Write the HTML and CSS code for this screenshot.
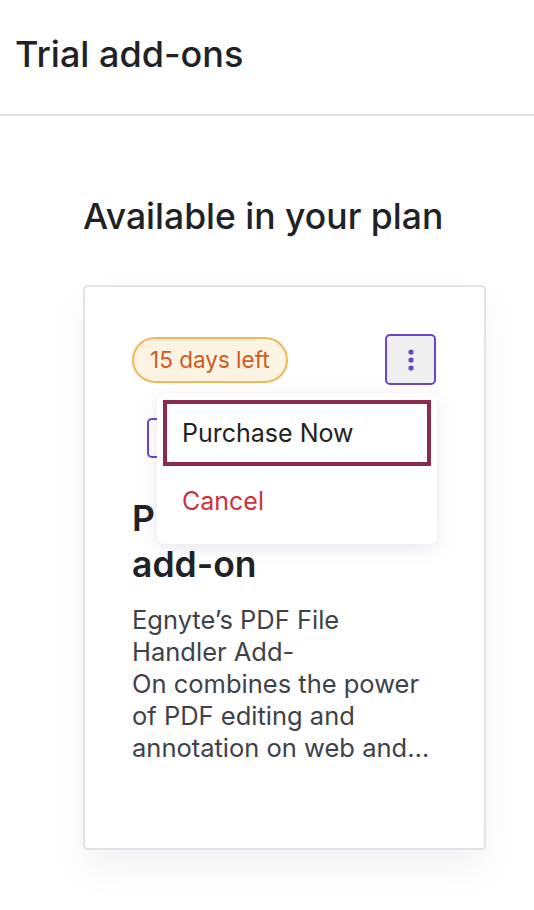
FILE: index.html
```html
<!DOCTYPE html>
<html lang="en">
<head>
<meta charset="utf-8">
<title>Trial add-ons</title>
<link rel="stylesheet" href="styles.css">
</head>
<body>
<header class="page-header">
  <h1 class="page-title">Trial add-ons</h1>
</header>
<main class="content">
  <h2 class="section-title">Available in your plan</h2>
  <article class="card">
    <div class="card-top">
      <span class="badge">15 days left</span>
      <div class="menu-wrap">
        <button class="kebab" aria-label="More actions">
          <svg width="8" height="24" viewBox="0 0 8 24"><circle cx="4" cy="4" r="2.6"/><circle cx="4" cy="12" r="2.6"/><circle cx="4" cy="20" r="2.6"/></svg>
        </button>
        <ul class="dropdown">
          <li class="dropdown-item focused">Purchase Now</li>
          <li class="dropdown-item danger">Cancel</li>
        </ul>
      </div>
    </div>
    <div class="logo-box"></div>
    <h3 class="card-title">PDF Handler add-on</h3>
    <p class="card-desc">Egnyte’s PDF File Handler Add-<br>On combines the power of PDF editing and annotation on web and mobile devices.</p>
  </article>
</main>
</body>
</html>
```
FILE: styles.css
```css
* { box-sizing: border-box; }
html, body { margin: 0; padding: 0; background: #fff; }
body {
  font-family: Inter, "Noto Sans", sans-serif;
  color: #212226;
}
.page-header {
  height: 116px;
  border-bottom: 2px solid #e3e3ea;
  display: flex;
  align-items: center;
  padding: 0 15px 6px;
}
.page-title {
  margin: 0;
  font-size: 36px;
  font-weight: 500;
}
.content {
  padding: 79px 0 60px 83px;
}
.section-title {
  margin: 0 0 46px;
  font-size: 35.5px;
  font-weight: 500;
  line-height: 44px;
}
.card {
  width: 403px;
  height: 565px;
  border: 2px solid #e2e2e8;
  border-radius: 5px;
  padding: 47px 48px 0 47px;
  box-shadow: 0 18px 36px rgba(30, 30, 60, 0.06);
  background: #fff;
}
.card-top {
  display: flex;
  justify-content: space-between;
  align-items: center;
  height: 51px;
}
.badge {
  display: inline-flex;
  align-items: center;
  height: 46px;
  padding: 0 16px;
  border: 2px solid #f1b75a;
  border-radius: 23px;
  background: #fdf3e3;
  color: #d15a1e;
  font-size: 22.5px;
  font-weight: 400;
}
.menu-wrap { position: relative; }
.kebab {
  width: 51px;
  height: 51px;
  border: 2px solid #6a45c6;
  border-radius: 5px;
  background: #efeff0;
  display: flex;
  align-items: center;
  justify-content: center;
  padding: 0;
}
.kebab svg { fill: #6a45c6; }
.dropdown {
  position: absolute;
  top: 60px;
  right: -1px;
  width: 280px;
  margin: 0;
  padding: 6px 6px 8px;
  list-style: none;
  background: #fff;
  border-radius: 7px;
  box-shadow: 0 4px 18px rgba(70, 60, 140, 0.13);
  z-index: 2;
}
.dropdown-item {
  height: 66px;
  display: flex;
  align-items: center;
  padding: 0 19px;
  font-size: 25px;
  color: #222;
}
.dropdown-item.focused {
  border: 4px solid #8c2a4c;
  padding: 0 15px;
}
.dropdown-item.danger {
  color: #cc3338;
  height: 70px;
}
.logo-box {
  margin: 33px 0 0 15px;
  width: 70px;
  height: 40px;
  border: 2px solid #6a45c6;
  border-radius: 5px;
}
.card-title {
  margin: 38px 0 0;
  font-size: 35.5px;
  font-weight: 600;
  line-height: 46px;
  color: #212226;
  width: 230px;
}
.card-desc {
  margin: 16px 0 0;
  font-size: 25.5px;
  line-height: 32px;
  color: #404249;
  display: -webkit-box;
  -webkit-line-clamp: 5;
  -webkit-box-orient: vertical;
  overflow: hidden;
}
```
